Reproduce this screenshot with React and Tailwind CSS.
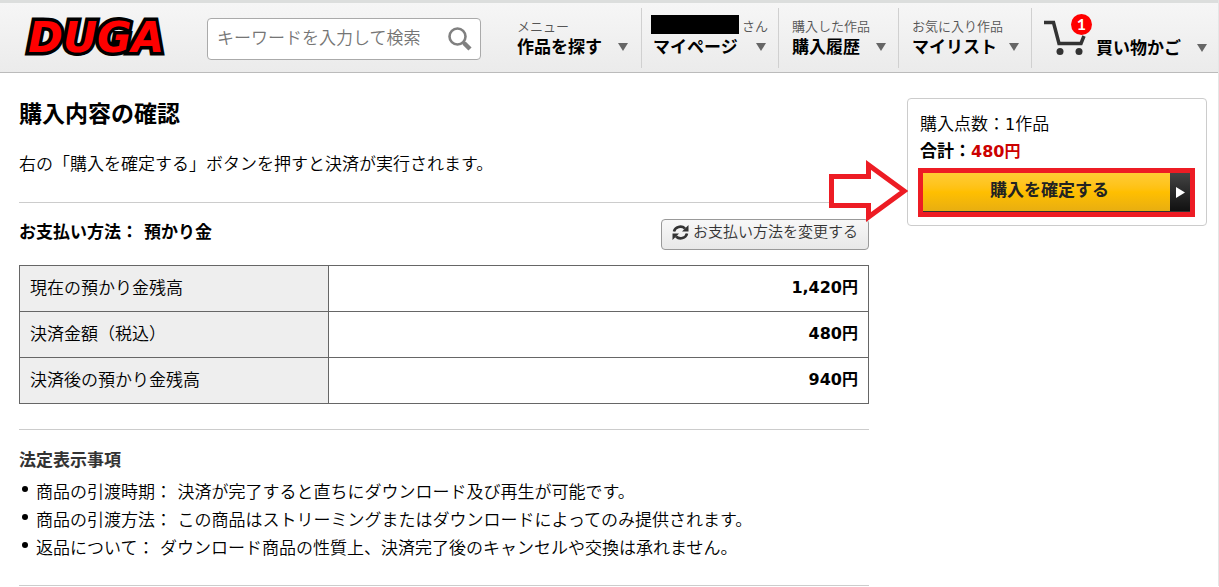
import React, { useState } from 'react';

const balances = [
    { label: '現在の預かり金残高', amount: '1,420円' },
    { label: '決済金額（税込）', amount: '480円' },
    { label: '決済後の預かり金残高', amount: '940円' },
];

const notices = [
    '商品の引渡時期： 決済が完了すると直ちにダウンロード及び再生が可能です。',
    '商品の引渡方法： この商品はストリーミングまたはダウンロードによってのみ提供されます。',
    '返品について： ダウンロード商品の性質上、決済完了後のキャンセルや交換は承れません。',
];

function Logo() {
    return (
        <svg width="154" height="56" viewBox="0 0 154 56" role="img" aria-label="DUGA">
            <text
                x="76"
                y="42"
                textAnchor="middle"
                fontSize="42"
                fontWeight="700"
                fontStyle="italic"
                fill="#ff0000"
                stroke="#000000"
                strokeWidth="7"
                paintOrder="stroke"
                className="font-['DejaVu_Sans',sans-serif]"
            >
                DUGA
            </text>
        </svg>
    );
}

function SearchIcon() {
    return (
        <svg width="24" height="24" viewBox="0 0 24 24" fill="none" stroke="#808080">
            <circle cx="9.5" cy="9.5" r="8" strokeWidth="2.600" />
            <path d="M15 15L17 17" strokeWidth="3" />
            <path d="M16 16L22 22" strokeWidth="4.5" />
        </svg>
    );
}

function CartIcon() {
    return (
        <svg width="42" height="36" viewBox="0 0 42 36" fill="none">
            <path d="M0 2.500H9.500L15 23.500H37L40 16" stroke="#333333" strokeWidth="3.500" />
            <circle cx="16" cy="31.500" r="3.500" fill="#333333" />
            <circle cx="35" cy="31.500" r="3.500" fill="#333333" />
        </svg>
    );
}

function RefreshIcon() {
    return (
        <svg width="17" height="17" viewBox="0 0 17 17" fill="none">
            <path d="M2 7.500A6.500 6 0 0 1 13 4.500M15 9.500A6.500 6 0 0 1 4 12.500" stroke="#333333" strokeWidth="2.600" />
            <path d="M16.500 1V7.500H10ZM0.500 16V9.500H7Z" fill="#333333" />
        </svg>
    );
}

function DownArrow() {
    return (
        <svg width="10" height="8" viewBox="0 0 10 8" className="shrink-0">
            <path d="M0 0H10L5 8Z" fill="#666666" />
        </svg>
    );
}

function NavItem({ className, small, label }) {
    return (
        <a href="#" className={`block h-[60px] shrink-0 border-r border-[#d0d0d0] pt-[9px] whitespace-nowrap ${className}`}>
            <span className="flex text-[13px] leading-5 font-[350] text-[#555]">{small}</span>
            <span className="flex items-center justify-between text-[17px] leading-5 font-bold text-black">
                {label}
                <DownArrow />
            </span>
        </a>
    );
}

function Header() {
    const [keyword, setKeyword] = useState('');

    return (
        <header className="flex h-[73px] items-center border-t-[3px] border-b border-t-[#dcdedd] border-b-[#bbb] bg-gradient-to-b from-[#f6f6f6] to-[#ebebeb] pl-5">
            <a href="#" className="shrink-0">
                <Logo />
            </a>
            <form
                onSubmit={(e) => e.preventDefault()}
                className="mt-0.5 ml-[33px] flex h-[42px] w-[274px] shrink-0 items-center rounded border border-[#aaa] bg-white pr-2 pl-[9px]"
            >
                <input
                    type="text"
                    aria-label="キーワード"
                    placeholder="キーワードを入力して検索"
                    value={keyword}
                    onChange={(e) => setKeyword(e.target.value)}
                    className="min-w-0 flex-1 pb-0.5 text-[17px] leading-6 font-[350] outline-none placeholder:text-[#757575]"
                />
                <button type="submit" aria-label="検索">
                    <SearchIcon />
                </button>
            </form>
            <nav className="ml-6 flex flex-1">
                <NavItem className="w-[137px] pr-[13px] pl-3" small="メニュー" label="作品を探す" />
                <NavItem
                    className="w-[137px] pr-3 pl-[9px]"
                    small={
                        <>
                            <span className="mr-[3px] -mt-0.5 h-[19px] w-[88px] shrink-0 bg-black" />
                            さん
                        </>
                    }
                    label={<span className="pl-0.5">マイページ</span>}
                />
                <NavItem className="w-[120px] pr-3 pl-[13px]" small="購入した作品" label="購入履歴" />
                <NavItem className="w-[133px] pr-3 pl-[13px]" small="お気に入り作品" label="マイリスト" />
                <a href="#" className="flex h-[60px] flex-1 items-end pr-[11px] pb-2.5 pl-3">
                    <span className="relative mb-0.5 shrink-0">
                        <CartIcon />
                        <span className="absolute -top-1.5 left-[27px] flex size-[21px] items-center justify-center rounded-full bg-[#ff0000] font-['Lato',sans-serif] text-base leading-5 font-bold text-white">
                            1
                        </span>
                    </span>
                    <span className="ml-2.5 text-[17px] leading-5 font-bold whitespace-nowrap text-black">買い物かご</span>
                    <span className="mb-1.5 ml-auto">
                        <DownArrow />
                    </span>
                </a>
            </nav>
        </header>
    );
}

function OrderSummary() {
    return (
        <aside className="relative w-[300px] shrink-0 self-start rounded border border-[#ccc] px-2.5 pt-3 pb-2">
            <p className="pl-0.5 text-[17px] leading-[27px] font-[350]">
                購入点数：<span className="text-base font-normal">1</span>作品
            </p>
            <p className="pl-0.5 text-[17px] leading-[27px] font-bold">
                合計：<span className="text-base text-[#cc0000]">480円</span>
            </p>
            <div className="mt-[3px] mr-px border-[5px] border-[#ed1c24]">
                <button type="button" className="flex h-[39px] w-full border-b border-[#333]">
                    <span className="h-full flex-1 bg-gradient-to-b from-[#ffcc33] via-[#ffbf00] to-[#e8ae10] pt-[3px] pl-1.5 text-[17px] leading-7 font-bold text-[#222]">
                        購入を確定する
                    </span>
                    <span className="flex h-full w-5 items-center justify-center bg-gradient-to-b from-[#444] to-[#111]">
                        <svg width="9" height="11" viewBox="0 0 9 11">
                            <path d="M0 0L9 5.500L0 11Z" fill="#ffffff" />
                        </svg>
                    </span>
                </button>
            </div>
            {/* callout arrow pointing at the confirm button */}
            <svg width="79" height="62" viewBox="0 0 79 62" className="absolute top-[61px] right-full">
                <path
                    d="M2.500 16.500H39.500V5L75 31L39.500 57V45.500H2.500Z"
                    fill="#ffffff"
                    stroke="#ed1c24"
                    strokeWidth="5"
                />
            </svg>
        </aside>
    );
}

function App() {
    return (
        <div className="border-r border-[#e5e5e5] bg-white font-['DejaVu_Sans','Noto_Sans_CJK_JP',sans-serif] text-black">
            <Header />
            <main className="flex gap-[38px] pt-[25px] pr-[11px] pl-[19px]">
                <div className="min-w-0 flex-1">
                    <h1 className="text-[23px] leading-8 font-bold">購入内容の確認</h1>
                    <p className="mt-5 text-[17px] leading-7 font-[350]">
                        右の「購入を確定する」ボタンを押すと決済が実行されます。
                    </p>

                    <section className="mt-6 border-t border-[#ccc] pt-[15px]">
                        <div className="flex items-center justify-between">
                            <h2 className="pb-1 text-[17px] leading-7 font-bold">お支払い方法： 預かり金</h2>
                            <button
                                type="button"
                                className="flex h-[31px] items-center gap-1 rounded-sm border border-[#999] bg-gradient-to-b from-[#f8f8f8] to-[#e8e8e8] px-2.5 pb-1 text-[15px] leading-6 font-[350] text-[#333]"
                            >
                                <RefreshIcon />
                                お支払い方法を変更する
                            </button>
                        </div>
                        <table className="mt-[15px] w-full border-collapse text-[17px] leading-6">
                            <tbody>
                                {balances.map((row) => (
                                    <tr key={row.label} className="h-[46px]">
                                        <th scope="row" className="w-[309px] border border-[#666] bg-[#eee] px-2.5 pb-0.5 text-left font-[350]">
                                            {row.label}
                                        </th>
                                        <td className="border border-[#666] px-2.5 pb-0.5 text-right text-base font-bold">{row.amount}</td>
                                    </tr>
                                ))}
                            </tbody>
                        </table>
                    </section>

                    <section className="mt-[25px] border-y border-[#ccc] pt-4 pb-[23px]">
                        <h2 className="text-[17px] leading-7 font-bold text-[#333]">法定表示事項</h2>
                        <ul className="mt-1 text-[17px] leading-7 font-[350]">
                            {notices.map((notice) => (
                                <li key={notice} className="flex">
                                    <span className="mt-2 mr-2 ml-[3px] size-1.5 shrink-0 rounded-full bg-black" />
                                    {notice}
                                </li>
                            ))}
                        </ul>
                    </section>
                </div>
                <OrderSummary />
            </main>
        </div>
    );
}

export default App;
